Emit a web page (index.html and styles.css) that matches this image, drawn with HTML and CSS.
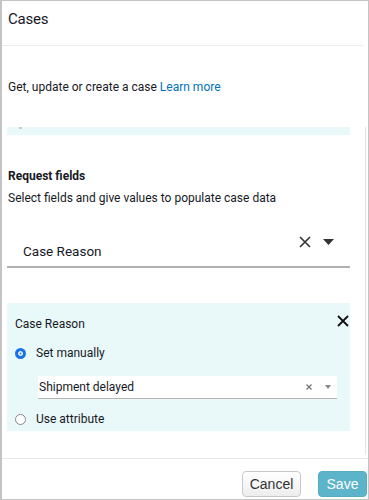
FILE: index.html
```html
<!DOCTYPE html>
<html>
<head>
<meta charset="utf-8">
<link rel="stylesheet" href="styles.css">
</head>
<body>
<div class="panel">
  <div class="header"><h1 class="title">Cases</h1></div>
  <div class="body">
    <p class="intro">Get, update or create a case <a class="link" href="#">Learn more</a></p>
    <div class="strip"><span class="dot"></span></div>
    <h2 class="section-title">Request fields</h2>
    <p class="section-desc">Select fields and give values to populate case data</p>
    <div class="field-select">
      <span class="field-value">Case Reason</span>
      <span class="field-icons">
        <svg class="ico-x" width="12" height="12" viewBox="0 0 12 12"><path d="M1 1L11 11M11 1L1 11" stroke="#333" stroke-width="1.6" fill="none"/></svg>
        <svg class="ico-caret" width="11" height="6" viewBox="0 0 11 6"><path d="M0 0H11L5.5 6Z" fill="#333"/></svg>
      </span>
    </div>
    <div class="card">
      <div class="card-head">
        <span class="card-title">Case Reason</span>
        <svg class="card-close" width="12" height="12" viewBox="0 0 12 12"><path d="M1 1L11 11M11 1L1 11" stroke="#111" stroke-width="1.8" fill="none"/></svg>
      </div>
      <label class="radio-row">
        <span class="radio radio-on"></span>
        <span class="radio-label">Set manually</span>
      </label>
      <div class="value-select">
        <span class="value-text">Shipment delayed</span>
        <span class="value-icons">
          <svg width="6" height="6" viewBox="0 0 6 6"><path d="M0.5 0.5L5.5 5.5M5.5 0.5L0.5 5.5" stroke="#777" stroke-width="1.3" fill="none"/></svg>
          <svg width="6" height="4" viewBox="0 0 6 4"><path d="M0 0H6L3 4Z" fill="#888"/></svg>
        </span>
      </div>
      <label class="radio-row">
        <span class="radio"></span>
        <span class="radio-label">Use attribute</span>
      </label>
    </div>
  </div>
  <div class="footer">
    <button class="btn btn-cancel">Cancel</button>
    <button class="btn btn-save">Save</button>
  </div>
</div>
</body>
</html>
```

FILE: styles.css
```css
* { box-sizing: border-box; }
html, body { margin: 0; padding: 0; background: #fff; }
body { font-family: Roboto, "Liberation Sans", sans-serif; color: #16191f; }

.panel {
  width: 369px;
  height: 500px;
  border: 1px solid #c4c4c4;
  border-left-width: 2px;
  display: flex;
  flex-direction: column;
  overflow: hidden;
}

.header {
  height: 45px;
  border-bottom: 1px solid #ececec;
  margin-right: 5px;
  padding: 8px 0 0 6px;
}
.title {
  margin: 0;
  font-size: 15px;
  font-weight: 400;
  line-height: 20px;
  letter-spacing: -0.2px;
  color: #16191f;
}

.body {
  flex: 1;
  padding: 0 18px 0 5px;
  position: relative;
}
.body::after {
  content: "";
  position: absolute;
  right: 2px;
  top: 81px;
  bottom: 3px;
  width: 1px;
  background: #e2e2e2;
}

.intro {
  margin: 33px 0 0 1px;
  font-size: 12px;
  line-height: 17px;
}
.link { color: #0073bb; text-decoration: none; }

.strip {
  height: 8px;
  margin-top: 31px;
  background: #e9f8f9;
  position: relative;
}
.dot {
  position: absolute;
  left: 12px;
  top: 0;
  width: 3px;
  height: 2px;
  background: #c9c9c9;
}

.section-title {
  margin: 33px 0 0 1px;
  font-size: 12px;
  font-weight: 700;
  line-height: 17px;
}
.section-desc {
  margin: 5px 0 0 1px;
  font-size: 12px;
  line-height: 17px;
}

.field-select {
  margin-top: 24px;
  height: 37px;
  border-bottom: 2px solid #b0b0b0;
  display: flex;
  justify-content: space-between;
  padding: 0 16px 0 16px;
  position: relative;
}
.field-value {
  font-size: 13.5px;
  line-height: 18px;
  align-self: flex-end;
  margin-bottom: 6px;
}
.field-icons {
  display: flex;
  align-items: center;
  gap: 12px;
  height: 14px;
  margin-top: 4px;
}

.card {
  margin-top: 35px;
  background: #e9f8f9;
  height: 128px;
  padding: 10px 1px 0 8px;
}
.card-head {
  display: flex;
  justify-content: space-between;
  align-items: center;
  height: 22px;
}
.card-title { font-size: 12px; line-height: 17px; }
.card-close { margin-top: -6px; }

.radio-row {
  display: flex;
  align-items: center;
  gap: 10px;
  height: 20px;
  font-size: 12px;
}
.radio-row:first-of-type { margin-top: 8px; }
.radio {
  width: 11px;
  height: 11px;
  border-radius: 50%;
  border: 1.5px solid #8a8a8a;
  background: #fff;
  flex: none;
}
.radio-on {
  border: 3px solid #1a73e8;
  box-shadow: inset 0 0 0 1.5px #fff;
  background: #1a73e8;
}
.radio-label { font-size: 12px; line-height: 17px; }

.value-select {
  margin: 13px 12px 10px 23px;
  height: 23px;
  background: #fff;
  border-bottom: 1px solid #b5b5b5;
  display: flex;
  align-items: center;
  justify-content: space-between;
  padding: 0 6px 0 1px;
}
.value-text { font-size: 12px; }
.value-icons { display: flex; align-items: center; gap: 13px; }

.footer {
  height: 41px;
  border-top: 1px solid #e6e6e6;
  display: flex;
  justify-content: flex-end;
  align-items: flex-start;
  gap: 17px;
  padding: 12px 1px 0 0;
}
.btn {
  font-family: "Liberation Sans", Arial, sans-serif;
  font-size: 14px;
  height: 26px;
  border-radius: 4px;
  padding: 0;
}
.btn-cancel {
  width: 59px;
  border: 1px solid #c8c8c8;
  background: linear-gradient(#ffffff, #ededed);
  color: #333;
}
.btn-save {
  width: 49px;
  border: 1px solid #55adc2;
  background: #5bb4ca;
  color: #fff;
}
```
